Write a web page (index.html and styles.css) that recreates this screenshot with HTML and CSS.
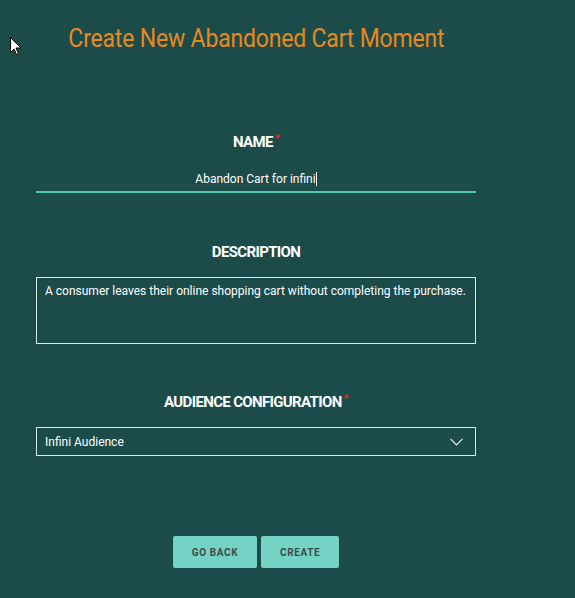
FILE: index.html
```html
<!DOCTYPE html>
<html>
<head>
<meta charset="utf-8">
<link rel="stylesheet" href="styles.css">
</head>
<body>
<svg class="cursor" width="12" height="19" viewBox="0 0 12 19"><path d="M0.5 0.5 L0.5 15.5 L4 12 L6.5 17.5 L8.5 16.5 L6 11 L11 11 Z" fill="#fff" stroke="#000" stroke-width="1"/></svg>
<div class="page">
  <h1 class="title"><span class="title-text">Create New Abandoned Cart Moment</span></h1>
  <div class="field name-field">
    <div class="label">NAME<span class="req">*</span></div>
    <div class="name-input">Abandon Cart for infini<span class="caret"></span></div>
  </div>
  <div class="field desc-field">
    <div class="label">DESCRIPTION</div>
    <div class="textarea">A consumer leaves their online shopping cart without completing the purchase.</div>
  </div>
  <div class="field aud-field">
    <div class="label">AUDIENCE CONFIGURATION<span class="req">*</span></div>
    <div class="select">
      <span>Infini Audience</span>
      <svg width="13" height="8" viewBox="0 0 13 8"><path d="M0.5 0.8 L6.5 6.8 L12.5 0.8" fill="none" stroke="#e6eeee" stroke-width="1.2"/></svg>
    </div>
  </div>
  <div class="actions">
    <button class="btn">GO BACK</button>
    <button class="btn">CREATE</button>
  </div>
</div>
</body>
</html>
```
FILE: styles.css
```css
html, body {
  margin: 0;
  padding: 0;
  background: #1b4c4a;
  height: 100%;
}
body {
  font-family: Roboto, "Liberation Sans", sans-serif;
  color: #ffffff;
  position: relative;
}
.cursor {
  position: absolute;
  left: 10px;
  top: 37px;
}
.page {
  width: 440px;
  margin-left: 36px;
  padding-top: 24px;
  display: flex;
  flex-direction: column;
  align-items: stretch;
}
.title {
  margin: 0;
  font-weight: 400;
  font-size: 25px;
  color: #e8891f;
  text-align: center;
  line-height: 30px;
}
.title-text {
  display: inline-block;
  transform: scaleX(0.92);
  letter-spacing: -0.2px;
}
.field {
  display: flex;
  flex-direction: column;
}
.label {
  text-align: center;
  font-weight: 700;
  font-size: 15px;
  letter-spacing: -0.65px;
  line-height: 18px;
}
.req {
  color: #e0302a;
  font-size: 11px;
  vertical-align: 5px;
  margin-left: 2px;
}
.name-field { margin-top: 76px; }
.name-input {
  margin-top: 20px;
  text-align: center;
  font-size: 12px;
  line-height: 16px;
  padding-bottom: 4px;
  border-bottom: 2px solid #4fc6b1;
}
.caret {
  display: inline-block;
  width: 1px;
  height: 14px;
  background: #fff;
  vertical-align: -3px;
}
.desc-field { margin-top: 50px; }
.textarea {
  margin-top: 16px;
  height: 67px;
  box-sizing: border-box;
  border: 1px solid #dfe8e8;
  padding: 5px 8px;
  font-size: 12px;
  line-height: 16px;
}
.aud-field { margin-top: 46px; }
.select {
  margin-top: 16px;
  height: 29px;
  box-sizing: border-box;
  border: 1px solid #dfe8e8;
  padding: 0 12px 0 8px;
  display: flex;
  align-items: center;
  justify-content: space-between;
  font-size: 12px;
}
.actions {
  margin-top: 80px;
  display: flex;
  justify-content: center;
  gap: 4px;
}
.btn {
  height: 32px;
  border: none;
  border-radius: 2px;
  background: #74d3c3;
  color: #3d4b4b;
  font-family: Roboto, "Liberation Sans", sans-serif;
  font-weight: 700;
  font-size: 10px;
  letter-spacing: 0.6px;
  padding: 0 19px;
}
```
